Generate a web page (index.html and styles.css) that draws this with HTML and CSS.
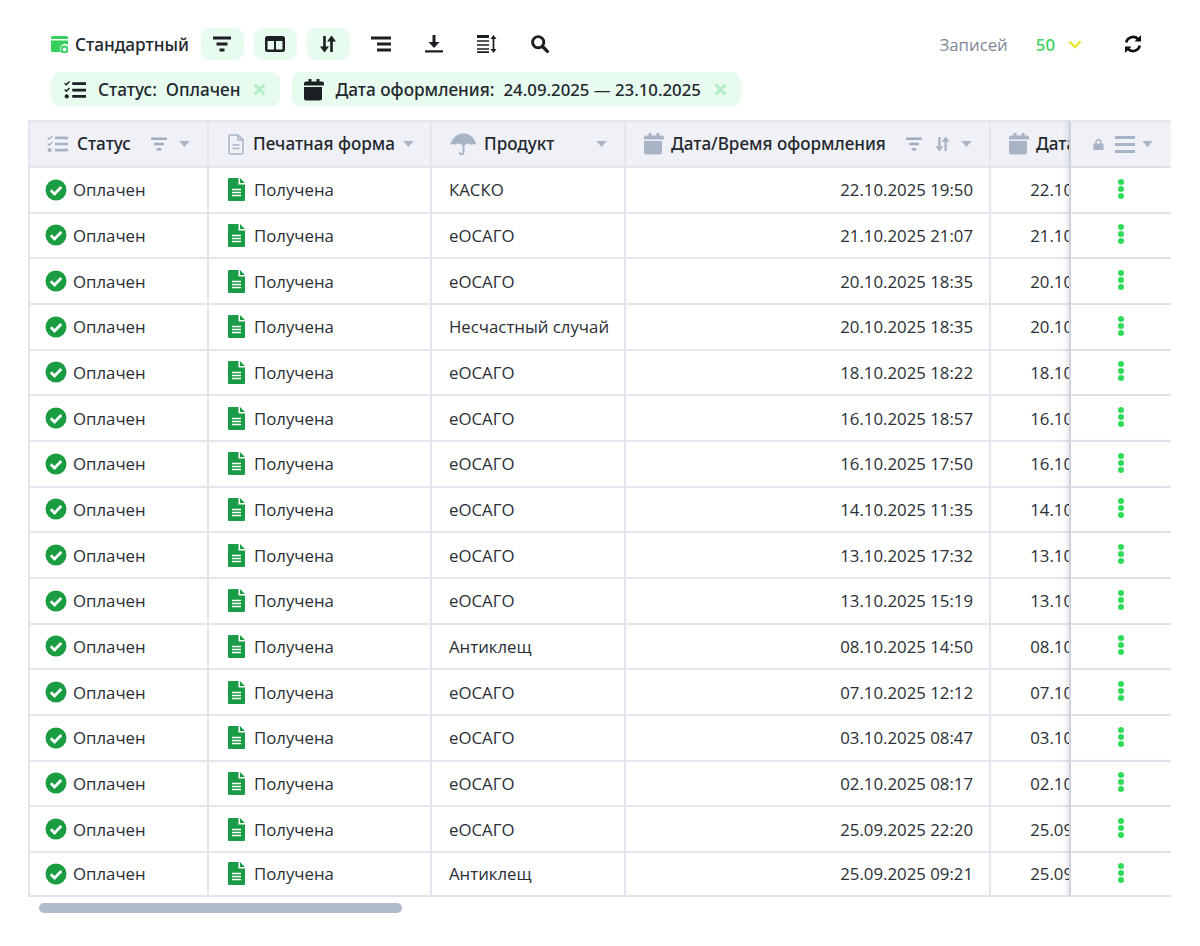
FILE: index.html
```html
<!DOCTYPE html>
<html lang="ru">
<head>
<meta charset="utf-8">
<title>Заказы</title>
<link rel="stylesheet" href="styles.css">
</head>
<body>
<svg class="defs" width="0" height="0" aria-hidden="true">
  <symbol id="i-filter" viewBox="0 0 20 16"><path d="M1 2h18M4.500 8h11M7.500 14h5" fill="none" stroke="currentColor" stroke-width="3"/></symbol>
  <symbol id="i-columns" viewBox="0 0 20 16"><path fill-rule="evenodd" d="M2.500 0h15A2.500 2.500 0 0 1 20 2.500v11a2.500 2.500 0 0 1-2.500 2.500h-15A2.500 2.500 0 0 1 0 13.500v-11A2.500 2.500 0 0 1 2.500 0zM2.500 5v8.500H9V5zM11 5v8.500h6.500V5z" fill="currentColor"/></symbol>
  <symbol id="i-sort" viewBox="0 0 16 18"><path d="M4.500 1v12M11.500 17V5" stroke="currentColor" stroke-width="2.600" fill="none"/><path d="M0 11.500h9L4.500 17.500zM7 6.500h9L11.500 .5z" fill="currentColor"/></symbol>
  <symbol id="i-align" viewBox="0 0 20 16"><path d="M0 2h20M6 8h14M6 14h14" fill="none" stroke="currentColor" stroke-width="3"/></symbol>
  <symbol id="i-download" viewBox="0 0 18 18"><path d="M9 0v9" stroke="currentColor" stroke-width="3" fill="none"/><path d="M3.500 7h11L9 13zM0 15.200h18V17.500H0z" fill="currentColor"/></symbol>
  <symbol id="i-height" viewBox="0 0 20 18"><path d="M0 1.500h12" stroke="currentColor" stroke-width="3" fill="none"/><path d="M0 6h12M0 10h12M0 14h12M0 17.200h12M16.500 3v12" stroke="currentColor" stroke-width="1.700" fill="none"/><path d="M13.500 4l3-4 3 4zM13.500 14l3 4 3-4z" fill="currentColor"/></symbol>
  <symbol id="i-search" viewBox="0 0 20 20"><circle cx="8" cy="8" r="6.200" fill="none" stroke="currentColor" stroke-width="3.200"/><path d="M12.800 12.800l5.400 5.400" stroke="currentColor" stroke-width="3.600" stroke-linecap="round"/></symbol>
  <symbol id="i-refresh" viewBox="0 0 18 18"><path d="M2.200 7.500A7 7 0 0 1 14 4M15.800 10.500A7 7 0 0 1 4 14" fill="none" stroke="currentColor" stroke-width="2.600"/><path d="M17 0v6.500h-6.500zM1 18v-6.500h6.500z" fill="currentColor"/></symbol>
  <symbol id="i-tasks" viewBox="0 0 24 20"><path d="M9 3h15M9 10h15M9 17h15" stroke="currentColor" stroke-width="3" fill="none"/><path d="M.8 2.500l1.800 1.800L6 .8M.8 9.500l1.800 1.800L6 7.800" stroke="currentColor" stroke-width="1.600" fill="none"/><circle cx="3" cy="17" r="2.300" fill="currentColor"/></symbol>
  <symbol id="i-cal" viewBox="0 0 20 22"><path d="M2 8h16v11.500a2 2 0 0 1-2 2H2a2 2 0 0 1-2-2V8zM2 2.500h2.500V0h3v2.500h5V0h3v2.500H18a2 2 0 0 1 2 2V6.500H0V4.500a2 2 0 0 1 2-2z" fill="currentColor"/></symbol>
  <symbol id="i-x" viewBox="0 0 12 12"><path d="M1.500 1.500l9 9M10.500 1.500l-9 9" stroke="currentColor" stroke-width="3" fill="none"/></symbol>
  <symbol id="i-doc" viewBox="0 0 16 21"><path d="M1.800 1h8.200l5 5v12.700a1.300 1.300 0 0 1-1.300 1.300H2.300A1.300 1.300 0 0 1 1 18.700V1.800A.8.800 0 0 1 1.800 1zM10 1v5h5M4.500 11h7M4.500 14.500h7" fill="none" stroke="currentColor" stroke-width="1.500"/></symbol>
  <symbol id="i-umbrella" viewBox="0 0 28 24"><path d="M14 1C7 1 2 6 0 13c2-1.500 4-1.500 5.500 0 1.500-1.500 4-2 6-.8V13h5v-.8c2-1.200 4.500-.7 6 .8 1.500-1.500 3.500-1.500 5 0C26 6 21 1 14 1z" fill="currentColor"/><path d="M14 10v10.500a2 2 0 0 1-4 0" stroke="currentColor" stroke-width="2" fill="none"/></symbol>
  <symbol id="i-lock" viewBox="0 0 12 12"><path d="M1.500 5h9a1 1 0 0 1 1 1v5a1 1 0 0 1-1 1h-9a1 1 0 0 1-1-1V6a1 1 0 0 1 1-1z" fill="currentColor"/><path d="M3.300 5.500V3.500a2.700 2.700 0 0 1 5.400 0v2" stroke="currentColor" stroke-width="1.500" fill="none"/></symbol>
  <symbol id="i-menu" viewBox="0 0 20 17"><path d="M0 1.500h20M0 8.500h20M0 15.500h20" stroke="currentColor" stroke-width="3" fill="none"/></symbol>
  <symbol id="i-caret" viewBox="0 0 12 7"><path d="M0 0h12L6 7z" fill="currentColor"/></symbol>
  <symbol id="i-check" viewBox="0 0 22 22"><circle cx="11" cy="11" r="10.500" fill="currentColor"/><path d="M5.800 11.300l3.700 3.700 6.800-7" fill="none" stroke="#fff" stroke-width="2.800"/></symbol>
  <symbol id="i-file" viewBox="0 0 17 23"><path d="M1 0h9.500v6.500H17V22a1 1 0 0 1-1 1H1a1 1 0 0 1-1-1V1a1 1 0 0 1 1-1zM12 0l5 5h-5z" fill="currentColor"/><path d="M4 11.500h9M4 14.500h9M4 17.500h9" stroke="#fff" stroke-width="1.500"/></symbol>
  <symbol id="i-dots" viewBox="0 0 6 20"><circle cx="3" cy="3" r="3" fill="currentColor"/><circle cx="3" cy="10" r="3" fill="currentColor"/><circle cx="3" cy="17" r="3" fill="currentColor"/></symbol>
  <symbol id="i-preset" viewBox="0 0 17 17"><path d="M1.500 0h14A1.500 1.500 0 0 1 17 1.500V3H0V1.500A1.500 1.500 0 0 1 1.500 0zM0 4.500h17V9a5 5 0 0 0-7 7H1.500A1.500 1.500 0 0 1 0 14.500z" fill="#35d05c"/><circle cx="13.500" cy="13.500" r="3" fill="none" stroke="#35d05c" stroke-width="2"/></symbol>
</svg>

<main class="page">
  <div class="toolbar">
    <div class="preset"><svg class="ic-preset"><use href="#i-preset"/></svg><span>Стандартный</span></div>
    <div class="tools">
      <button class="tool tool-on" type="button"><svg class="ic-20"><use href="#i-filter"/></svg></button>
      <button class="tool tool-on" type="button"><svg class="ic-20"><use href="#i-columns"/></svg></button>
      <button class="tool tool-on" type="button"><svg class="ic-18"><use href="#i-sort"/></svg></button>
      <button class="tool" type="button"><svg class="ic-20"><use href="#i-align"/></svg></button>
      <button class="tool" type="button"><svg class="ic-18"><use href="#i-download"/></svg></button>
      <button class="tool" type="button"><svg class="ic-20"><use href="#i-height"/></svg></button>
      <button class="tool" type="button"><svg class="ic-20"><use href="#i-search"/></svg></button>
    </div>
    <div class="records">
      <span class="records-label">Записей</span>
      <span class="records-value">50</span>
      <svg class="chevron" viewBox="0 0 14 9"><path d="M1.500 1.500L7 7l5.500-5.500" fill="none" stroke="currentColor" stroke-width="2.600"/></svg>
      <svg class="ic-refresh"><use href="#i-refresh"/></svg>
    </div>
  </div>

  <div class="chips">
    <div class="chip"><svg class="chip-icon"><use href="#i-tasks"/></svg><span>Статус:</span><span class="chip-val">Оплачен</span><svg class="chip-x"><use href="#i-x"/></svg></div>
    <div class="chip chip-date"><svg class="chip-icon"><use href="#i-cal"/></svg><span>Дата оформления:</span><span class="chip-val">24.09.2025 — 23.10.2025</span><svg class="chip-x"><use href="#i-x"/></svg></div>
  </div>

  <div class="grid-wrap">
    <table class="grid">
      <colgroup><col class="c1"><col class="c2"><col class="c3"><col class="c4"><col class="c5"><col class="c6"></colgroup>
      <thead>
        <tr>
          <th><div class="th"><svg class="h-tasks"><use href="#i-tasks"/></svg><span>Статус</span><svg class="h-filter"><use href="#i-filter"/></svg><svg class="h-caret"><use href="#i-caret"/></svg></div></th>
          <th><div class="th th-doc"><svg class="h-doc"><use href="#i-doc"/></svg><span class="wide">Печатная форма</span><svg class="h-caret near"><use href="#i-caret"/></svg></div></th>
          <th><div class="th"><svg class="h-umbrella"><use href="#i-umbrella"/></svg><span>Продукт</span><svg class="h-caret push"><use href="#i-caret"/></svg></div></th>
          <th><div class="th"><svg class="h-cal"><use href="#i-cal"/></svg><span>Дата/Время оформления</span><svg class="h-filter"><use href="#i-filter"/></svg><svg class="h-sort"><use href="#i-sort"/></svg><svg class="h-caret"><use href="#i-caret"/></svg></div></th>
          <th><div class="th"><svg class="h-cal"><use href="#i-cal"/></svg><span>Дата/Время</span></div></th>
          <th class="frozen"><div class="th th-frozen"><svg class="h-lock"><use href="#i-lock"/></svg><svg class="h-menu"><use href="#i-menu"/></svg><svg class="h-caret"><use href="#i-caret"/></svg></div></th>
        </tr>
      </thead>
      <tbody>
        <tr><td><div class="cell"><svg class="s-check"><use href="#i-check"/></svg>Оплачен</div></td><td><div class="cell doc"><svg class="s-file"><use href="#i-file"/></svg>Получена</div></td><td>КАСКО</td><td class="num">22.10.2025 19:50</td><td class="num">22.10.2025 19:50</td><td class="frozen"><svg class="s-dots"><use href="#i-dots"/></svg></td></tr>
        <tr><td><div class="cell"><svg class="s-check"><use href="#i-check"/></svg>Оплачен</div></td><td><div class="cell doc"><svg class="s-file"><use href="#i-file"/></svg>Получена</div></td><td>еОСАГО</td><td class="num">21.10.2025 21:07</td><td class="num">21.10.2025 21:07</td><td class="frozen"><svg class="s-dots"><use href="#i-dots"/></svg></td></tr>
        <tr><td><div class="cell"><svg class="s-check"><use href="#i-check"/></svg>Оплачен</div></td><td><div class="cell doc"><svg class="s-file"><use href="#i-file"/></svg>Получена</div></td><td>еОСАГО</td><td class="num">20.10.2025 18:35</td><td class="num">20.10.2025 18:35</td><td class="frozen"><svg class="s-dots"><use href="#i-dots"/></svg></td></tr>
        <tr><td><div class="cell"><svg class="s-check"><use href="#i-check"/></svg>Оплачен</div></td><td><div class="cell doc"><svg class="s-file"><use href="#i-file"/></svg>Получена</div></td><td>Несчастный случай</td><td class="num">20.10.2025 18:35</td><td class="num">20.10.2025 18:35</td><td class="frozen"><svg class="s-dots"><use href="#i-dots"/></svg></td></tr>
        <tr><td><div class="cell"><svg class="s-check"><use href="#i-check"/></svg>Оплачен</div></td><td><div class="cell doc"><svg class="s-file"><use href="#i-file"/></svg>Получена</div></td><td>еОСАГО</td><td class="num">18.10.2025 18:22</td><td class="num">18.10.2025 18:22</td><td class="frozen"><svg class="s-dots"><use href="#i-dots"/></svg></td></tr>
        <tr><td><div class="cell"><svg class="s-check"><use href="#i-check"/></svg>Оплачен</div></td><td><div class="cell doc"><svg class="s-file"><use href="#i-file"/></svg>Получена</div></td><td>еОСАГО</td><td class="num">16.10.2025 18:57</td><td class="num">16.10.2025 18:57</td><td class="frozen"><svg class="s-dots"><use href="#i-dots"/></svg></td></tr>
        <tr><td><div class="cell"><svg class="s-check"><use href="#i-check"/></svg>Оплачен</div></td><td><div class="cell doc"><svg class="s-file"><use href="#i-file"/></svg>Получена</div></td><td>еОСАГО</td><td class="num">16.10.2025 17:50</td><td class="num">16.10.2025 17:50</td><td class="frozen"><svg class="s-dots"><use href="#i-dots"/></svg></td></tr>
        <tr><td><div class="cell"><svg class="s-check"><use href="#i-check"/></svg>Оплачен</div></td><td><div class="cell doc"><svg class="s-file"><use href="#i-file"/></svg>Получена</div></td><td>еОСАГО</td><td class="num">14.10.2025 11:35</td><td class="num">14.10.2025 11:35</td><td class="frozen"><svg class="s-dots"><use href="#i-dots"/></svg></td></tr>
        <tr><td><div class="cell"><svg class="s-check"><use href="#i-check"/></svg>Оплачен</div></td><td><div class="cell doc"><svg class="s-file"><use href="#i-file"/></svg>Получена</div></td><td>еОСАГО</td><td class="num">13.10.2025 17:32</td><td class="num">13.10.2025 17:32</td><td class="frozen"><svg class="s-dots"><use href="#i-dots"/></svg></td></tr>
        <tr><td><div class="cell"><svg class="s-check"><use href="#i-check"/></svg>Оплачен</div></td><td><div class="cell doc"><svg class="s-file"><use href="#i-file"/></svg>Получена</div></td><td>еОСАГО</td><td class="num">13.10.2025 15:19</td><td class="num">13.10.2025 15:19</td><td class="frozen"><svg class="s-dots"><use href="#i-dots"/></svg></td></tr>
        <tr><td><div class="cell"><svg class="s-check"><use href="#i-check"/></svg>Оплачен</div></td><td><div class="cell doc"><svg class="s-file"><use href="#i-file"/></svg>Получена</div></td><td>Антиклещ</td><td class="num">08.10.2025 14:50</td><td class="num">08.10.2025 14:50</td><td class="frozen"><svg class="s-dots"><use href="#i-dots"/></svg></td></tr>
        <tr><td><div class="cell"><svg class="s-check"><use href="#i-check"/></svg>Оплачен</div></td><td><div class="cell doc"><svg class="s-file"><use href="#i-file"/></svg>Получена</div></td><td>еОСАГО</td><td class="num">07.10.2025 12:12</td><td class="num">07.10.2025 12:12</td><td class="frozen"><svg class="s-dots"><use href="#i-dots"/></svg></td></tr>
        <tr><td><div class="cell"><svg class="s-check"><use href="#i-check"/></svg>Оплачен</div></td><td><div class="cell doc"><svg class="s-file"><use href="#i-file"/></svg>Получена</div></td><td>еОСАГО</td><td class="num">03.10.2025 08:47</td><td class="num">03.10.2025 08:47</td><td class="frozen"><svg class="s-dots"><use href="#i-dots"/></svg></td></tr>
        <tr><td><div class="cell"><svg class="s-check"><use href="#i-check"/></svg>Оплачен</div></td><td><div class="cell doc"><svg class="s-file"><use href="#i-file"/></svg>Получена</div></td><td>еОСАГО</td><td class="num">02.10.2025 08:17</td><td class="num">02.10.2025 08:17</td><td class="frozen"><svg class="s-dots"><use href="#i-dots"/></svg></td></tr>
        <tr><td><div class="cell"><svg class="s-check"><use href="#i-check"/></svg>Оплачен</div></td><td><div class="cell doc"><svg class="s-file"><use href="#i-file"/></svg>Получена</div></td><td>еОСАГО</td><td class="num">25.09.2025 22:20</td><td class="num">25.09.2025 22:20</td><td class="frozen"><svg class="s-dots"><use href="#i-dots"/></svg></td></tr>
        <tr class="last"><td><div class="cell"><svg class="s-check"><use href="#i-check"/></svg>Оплачен</div></td><td><div class="cell doc"><svg class="s-file"><use href="#i-file"/></svg>Получена</div></td><td>Антиклещ</td><td class="num">25.09.2025 09:21</td><td class="num">25.09.2025 09:21</td><td class="frozen"><svg class="s-dots"><use href="#i-dots"/></svg></td></tr>
      </tbody>
    </table>
  </div>
  <div class="scrollbar"></div>
</main>
</body>
</html>
```
FILE: styles.css
```css
* { box-sizing: border-box; }
html, body { margin: 0; background: #fff; }
body {
  font-family: "Open Sans", "Noto Sans", sans-serif;
  font-size: 16.8px;
  color: #2a2e35;
  height: 946px;
  overflow: hidden;
}
.defs { position: absolute; }
svg { display: block; flex: none; }

.page { padding: 28px 29px 0 28px; }

.toolbar { display: flex; align-items: center; height: 32px; padding-left: 23px; }
.preset {
  display: flex; align-items: center; gap: 7px; color: #23272e;
  font-family: "Noto Sans", sans-serif; font-weight: 500; font-size: 17.2px;
}
.ic-preset { width: 17px; height: 17px; }
.tools { display: flex; gap: 10px; margin-left: 12px; }
.tool {
  width: 43px; height: 32px; padding: 0; border: 0; border-radius: 9px;
  background: transparent; color: #1c1f24;
  display: flex; align-items: center; justify-content: center;
}
.tool-on { background: #e7fbee; }
.ic-20 { width: 20px; height: 18px; }
.ic-18 { width: 18px; height: 18px; }

.records { margin-left: auto; display: flex; align-items: center; padding-right: 29px; }
.records-label { color: #7f8896; }
.records-value { color: #3bd160; font-family: "Noto Sans", sans-serif; font-weight: 500; margin-left: 28px; }
.chevron { width: 14px; height: 9px; color: #e6e83c; margin-left: 13px; }
.ic-refresh { width: 18px; height: 18px; color: #111; margin-left: 42px; }

.chips { display: flex; gap: 12px; margin-top: 12px; padding-left: 23px; }
.chip {
  height: 35px; padding: 0 14px 0 13px; border-radius: 9px; background: #e7fbee;
  display: flex; align-items: center; color: #23272e;
  font-family: "Noto Sans", sans-serif; font-weight: 500; font-size: 17.2px;
}
.chip-icon { width: 22px; height: 22px; margin-right: 12px; color: #1c1f24; }
.chip-val { margin-left: 9px; }
.chip-x { width: 13px; height: 13px; margin-left: 13px; color: #b4efc8; }
.chip-date { padding-left: 11px; }
.chip-date .chip-icon { margin-right: 10px; }
.chip-date .chip-val { font-size: 16.8px; }

.grid-wrap { margin-top: 13px; width: 1143px; overflow: hidden; }
.grid {
  border-collapse: separate; border-spacing: 0; table-layout: fixed; width: 1255px;
}
.c1 { width: 181px; } .c2 { width: 223px; } .c3 { width: 194px; }
.c4 { width: 365px; } .c5 { width: 190px; } .c6 { width: 102px; }

.grid th, .grid td {
  border-right: 2px solid #e3e6ec; border-bottom: 2px solid #e3e6ec;
  white-space: nowrap; overflow: hidden; padding: 0;
}
.grid th:first-child, .grid td:first-child { border-left: 2px solid #e3e6ec; }
.grid th {
  height: 48px; background: #eff1f7; border-top: 2px solid #e3e6ec;
  font-family: "Noto Sans", sans-serif; font-weight: 500; font-size: 17.1px;
  text-align: left; color: #23272e;
}
.grid td { height: 45.67px; padding: 0 16px 0 17px; font-weight: 400; }
.grid td:first-child { padding-left: 15px; }
.grid .last td { height: 44px; }
.grid .num { text-align: right; }

.th { display: flex; align-items: center; padding: 0 17px; height: 100%; }
.th span { white-space: nowrap; margin-top: -2px; }
.th-doc { padding-left: 19px; }
.h-tasks { width: 21px; height: 18px; margin-right: 9px; color: #a9b3c6; }
.h-doc { width: 16px; height: 21px; margin-right: 9px; color: #a9b3c6; }
.h-umbrella { width: 27px; height: 24px; margin-right: 7px; margin-left: 1px; color: #a9b3c6; }
.h-cal { width: 20px; height: 22px; margin-right: 7px; margin-left: 1px; color: #a9b3c6; }
.h-filter { width: 18px; height: 14px; margin-left: auto; color: #a0abc0; }
.h-sort { width: 15px; height: 16px; margin-left: 12px; color: #a9b3c6; }
.h-caret { width: 11px; height: 6px; margin-left: 11px; color: #a9b3c6; }
.h-caret.near { margin-left: 8px; }
.h-caret.push { margin-left: auto; }
.h-lock { width: 11px; height: 11px; color: #a9b3c6; }
.h-menu { width: 20px; height: 17px; margin-left: 11px; color: #a9b3c6; }
.th-frozen { padding: 0 0 0 22px; }
.th-frozen .h-caret { margin-left: 7px; }

.cell { display: flex; align-items: center; }
.s-check { width: 22px; height: 22px; margin-right: 6px; color: #1a9c40; }
.s-file { width: 17px; height: 23px; margin-right: 9px; color: #1a9c46; }
.doc { padding-left: 2px; }

.frozen {
  position: sticky; right: 0; background: #fff;
  border-left: 2px solid #cdd1da;
  box-shadow: -3px 0 4px rgba(90, 100, 120, .12);
  border-right: 0 !important;
}
.grid td.frozen { padding: 0 1px 0 0; }
.grid th.frozen { background: #eff1f7; }
.s-dots { width: 6px; height: 20px; margin: 0 auto; color: #2fdc55; transform: translateY(-1px); }

.scrollbar { width: 363px; height: 10px; margin: 6px 0 0 11px; border-radius: 5px; background: #b0bccd; }
```
